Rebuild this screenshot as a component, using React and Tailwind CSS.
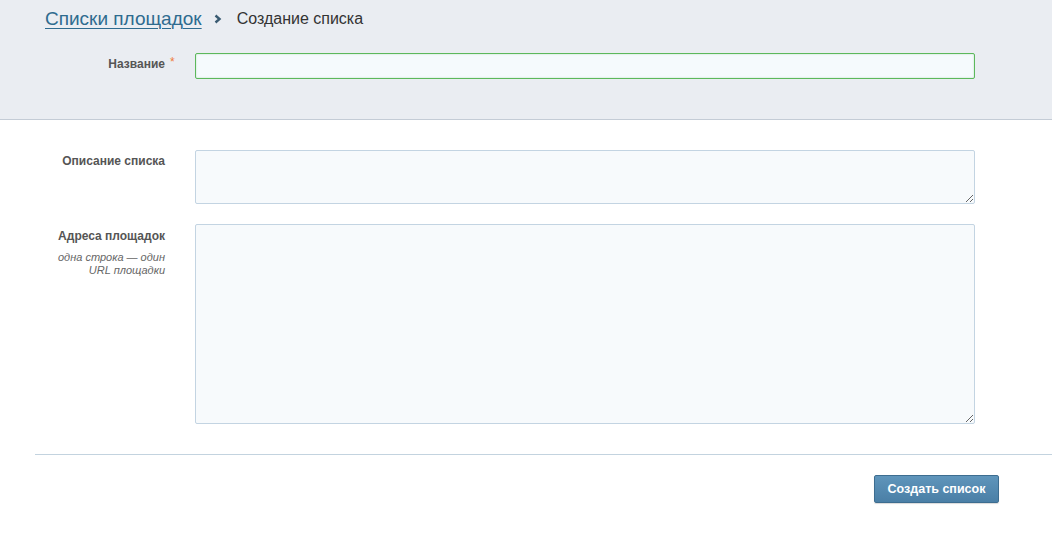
export default function App() {
  return (
    <div className="min-h-screen bg-white font-['Liberation_Sans',Arial,sans-serif]">
      {/* header block with breadcrumb and name field */}
      <div className="h-[120px] bg-[#eaedf2] border-b border-[#c4ccd6]">
        <div className="flex items-center pl-[45px] pt-[8px] h-[22px] box-content">
          <a href="#" className="text-[19px] leading-[22px] text-[#2e6b8f] underline underline-offset-[3px] decoration-[1px]">
            Списки площадок
          </a>
          <svg className="ml-[12px] mr-[15px]" width="8" height="10" viewBox="0 0 8 10">
            <path d="M1.5 1.5 L5.5 5 L1.5 8.5" fill="none" stroke="#3a5b72" strokeWidth="2.4" />
          </svg>
          <span className="text-[16px] leading-[22px] text-[#333]">Создание списка</span>
        </div>
        <div className="flex items-center mt-[23px]">
          <label className="w-[165px] text-right text-[12px] font-bold text-[#555] relative -top-[2px]">
            Название
            <span className="absolute left-[170px] -top-[2px] text-[#ef7b3a] font-normal">*</span>
          </label>
          <input
            type="text"
            className="ml-[30px] w-[780px] h-[26px] border border-[#5cb85c] bg-[#f5fafd] rounded-[2px] outline-none shadow-[inset_0_0_2px_rgba(92,184,92,0.4)]"
          />
        </div>
      </div>

      <div className="pt-[30px]">
        <div className="flex items-start">
          <label className="w-[165px] text-right text-[12px] font-bold text-[#555] pt-[2px]">
            Описание списка
          </label>
          <textarea className="ml-[30px] w-[780px] h-[54px] border border-[#c3d4e2] bg-[#f7fafc] rounded-[2px] outline-none" />
        </div>
        <div className="flex items-start mt-[20px]">
          <div className="w-[165px] text-right pt-[3px]">
            <div className="text-[12px] font-bold text-[#555]">Адреса площадок</div>
            <div className="text-[11px] italic text-[#666] leading-[13px] mt-[6px]">
              одна строка — один
              <br />
              URL площадки
            </div>
          </div>
          <textarea className="ml-[30px] w-[780px] h-[200px] border border-[#c3d4e2] bg-[#f7fafc] rounded-[2px] outline-none" />
        </div>

        <div className="ml-[35px] mt-[30px] border-t border-[#c3d3df]" />

        <div className="flex justify-end pr-[53px] pt-[20px]">
          <button className="h-[28px] w-[125px] rounded-[2px] border border-[#3d6d90] bg-gradient-to-b from-[#5f95bb] to-[#4a7fa6] text-white text-[12.5px] font-bold shadow-[0_1px_1px_rgba(0,0,0,0.15)]">
            Создать список
          </button>
        </div>
      </div>
    </div>
  );
}
